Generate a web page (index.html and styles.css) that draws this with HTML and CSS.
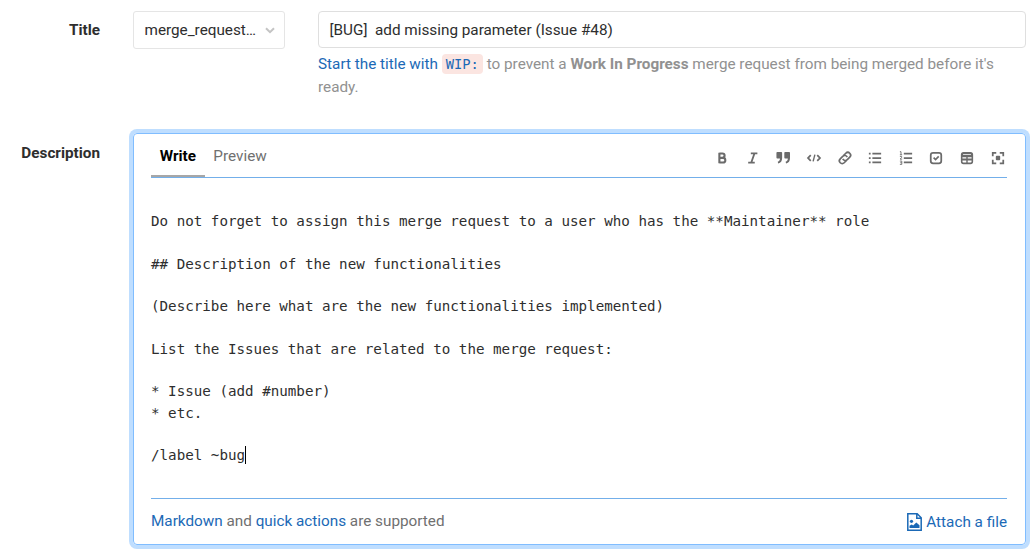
FILE: index.html
```html
<!DOCTYPE html>
<html lang="en">
<head>
<meta charset="utf-8">
<title>New merge request</title>
<link rel="stylesheet" href="styles.css">
</head>
<body>
<form class="form">
  <div class="row title-row">
    <label class="label">Title</label>
    <div class="template-select"><span>merge_request…</span>
      <svg class="chevron" width="10" height="7" viewBox="0 0 10 7"><path d="M1 1.2 5 5.2 9 1.2"/></svg>
    </div>
    <div class="title-field">
      <div class="text-input">[BUG]&nbsp; add missing parameter (Issue #48)</div>
      <p class="hint"><a>Start the title with <code>WIP:</code></a> to prevent a <strong>Work In Progress</strong> merge request from being merged before it's ready.</p>
    </div>
  </div>
  <div class="row description-row">
    <label class="label">Description</label>
    <div class="editor">
      <div class="editor-header">
        <div class="tab tab-active">Write</div>
        <div class="tab">Preview</div>
        <div class="toolbar">
          <svg viewBox="0 0 16 16"><path class="line" stroke-width="2.4" d="M5 2v12M5 2.800h3.500a2.400 2.400 0 0 1 0 4.900H5M5 7.800h4.100a2.700 2.700 0 0 1 0 5.400H5"/></svg>
          <svg viewBox="0 0 16 16"><path class="line" stroke-width="2" d="M5.500 2.700h7.500M2.500 13.300H10M9.700 2.700 6 13.300"/></svg>
          <svg viewBox="0 0 16 16"><path d="M1.500 1h4.500a1 1 0 0 1 1 1v6c0 3.500-1.500 5.500-4.500 6.200l-.5-1.900C3.800 11.700 4.500 10.500 4.500 8.500h-3a1 1 0 0 1-1-1V2a1 1 0 0 1 1-1zM10.500 1H15a1 1 0 0 1 1 1v6c0 3.500-1.500 5.500-4.500 6.200l-.5-1.900c1.800-.6 2.500-1.800 2.500-3.800h-3a1 1 0 0 1-1-1V2a1 1 0 0 1 1-1z"/></svg>
          <svg viewBox="0 0 16 16"><path class="line" stroke-width="2" d="M4.300 4.800 1.200 8l3.100 3.200M11.700 4.800 14.800 8l-3.100 3.200"/><path class="line" stroke-width="1.600" d="M9 4.200 7 11.800"/></svg>
          <svg viewBox="0 0 16 16"><g class="line" stroke-width="1.900" transform="rotate(-45 8 8)"><path d="M7.200 11.200H3.500a3.200 3.200 0 0 1 0-6.400h4a3.200 3.200 0 0 1 3 4.300"/><path d="M8.800 4.800h3.700a3.200 3.200 0 0 1 0 6.400h-4a3.200 3.200 0 0 1-3-4.300"/></g></svg>
          <svg viewBox="0 0 16 16"><path d="M1 2h2v2H1zM1 7h2v2H1zM1 12h2v2H1zM5 2h10v2H5zM5 7h10v2H5zM5 12h10v2H5z"/></svg>
          <svg viewBox="0 0 16 16"><path d="M5.500 2H15v2H5.500zM5.500 7H15v2H5.500zM5.500 12H15v2H5.500z"/><path class="line" stroke-width="1" d="M1 .8h1.300v3.500M1 4.300h2.600M1 6.200h2v1.300L1.200 9.300h2.400M1 11.500h2.200v3.800H1M1.400 13.400h1.800"/></svg>
          <svg viewBox="0 0 16 16"><rect class="line" stroke-width="2" x="2" y="2" width="12" height="12" rx="2.600"/><path class="line" stroke-width="1.900" d="m5.300 7.500 2.200 2.200 3.600-3.500"/></svg>
          <svg viewBox="0 0 16 16"><path fill-rule="evenodd" d="M4 1h8a3 3 0 0 1 3 3v8a3 3 0 0 1-3 3H4a3 3 0 0 1-3-3V4a3 3 0 0 1 3-3zM2.800 7v1.500h4.400V7zm6 0v1.500h4.400V7zM2.800 10.900V12a1.200 1.200 0 0 0 1.200 1.200h3.200v-2.300zm6 0v2.300H12a1.200 1.200 0 0 0 1.200-1.200v-1.100zM3.500 3.500v.7h9v-.7z"/></svg>
          <svg viewBox="0 0 16 16"><path class="line" stroke-width="2" d="M2 6V2h4M10 2h4v4M14 10v4h-4M6 14H2v-4"/><rect x="5.500" y="5.500" width="5" height="5" rx="1"/></svg>
        </div>
      </div>
      <div class="source">Do not forget to assign this merge request to a user who has the **Maintainer** role

## Description of the new functionalities

(Describe here what are the new functionalities implemented)

List the Issues that are related to the merge request:

* Issue (add #number)
* etc.

/label ~bug<span class="caret"></span></div>
      <div class="editor-footer">
        <div><a>Markdown</a> and <a>quick actions</a> are supported</div>
        <a class="attach"><svg width="15" height="18" viewBox="0 0 15 18"><path class="line" stroke-width="1.500" d="M.8.8h9.400l4 4v12.400H.8zM9.800 1v4.200h4.200"/><circle cx="4.500" cy="8.300" r="1.600"/><path d="M2.500 15v-2.200l2.200-1.200 1.500.8L9.300 9.500l3.200 2.800V15z"/></svg>Attach a file</a>
      </div>
    </div>
  </div>
</form>
</body>
</html>
```
FILE: styles.css
```css
* { box-sizing: border-box; }
body {
  margin: 0;
  background: #fff;
  color: #2e2e2e;
  font: 15.29px/23px Roboto, sans-serif;
}
a { color: #1b69b6; }
.form { padding: 11px 10px 9px 0; }
.row { display: flex; }
.title-row { height: 122px; }
.label {
  width: 100px;
  margin-right: 33px;
  padding-top: 8px;
  font-weight: 700;
  text-align: right;
}
.template-select {
  display: flex;
  align-items: center;
  justify-content: space-between;
  width: 152px;
  height: 38px;
  margin-right: 33px;
  padding: 0 9px 0 10.5px;
  border: 1px solid #e5e5e5;
  border-radius: 3px;
}
.chevron { flex: none; fill: none; stroke: #c4c4c4; stroke-width: 2; }
.title-field { flex: 1; }
.text-input {
  height: 37px;
  padding: 7px 10.5px 0;
  border: 1px solid #dfdfdf;
  border-radius: 4px;
}
.hint { margin: 5px 0 0; color: #919191; }
.hint code {
  padding: 2px 4px;
  border-radius: 4px;
  background: #fbe5e1;
  font: 13.75px/17px "DejaVu Sans Mono", monospace;
}
.editor {
  display: flex;
  flex: 1;
  flex-direction: column;
  height: 412px;
  padding: 0 18px 0 17px;
  border: 1px solid #80bdff;
  border-radius: 4px;
  box-shadow: 0 0 0 4px #bfdeff;
}
.description-row .label { padding-top: 9px; }
.editor-header {
  display: flex;
  height: 44px;
  border-bottom: 1px solid #73afea;
}
.tab { height: 43px; padding: 11px 8.7px 0; color: #707070; }
.tab-active { border-bottom: 2px solid #a7a7a7; color: #000; font-weight: 700; }
.toolbar {
  display: flex;
  gap: 16.6px;
  margin: 17px 2.5px 0 auto;
}
.toolbar svg { width: 14px; height: 14px; fill: #6b6b6b; overflow: visible; }
.toolbar .line { fill: none; stroke: #6b6b6b; }
.source {
  flex: 1;
  padding-top: 33px;
  font: 14.21px/21.3px "DejaVu Sans Mono", monospace;
  white-space: pre;
}
.caret {
  display: inline-block;
  width: 1px;
  height: 18px;
  background: #000;
  vertical-align: -4px;
}
.editor-footer {
  display: flex;
  justify-content: space-between;
  height: 46px;
  padding-top: 11px;
  border-top: 1px solid #73afea;
  color: #707070;
}
.attach { display: flex; gap: 4px; padding-top: 1px; }
.attach svg { margin-top: 2px; fill: #1b69b6; }
.attach .line { fill: none; stroke: #1b69b6; }
```
